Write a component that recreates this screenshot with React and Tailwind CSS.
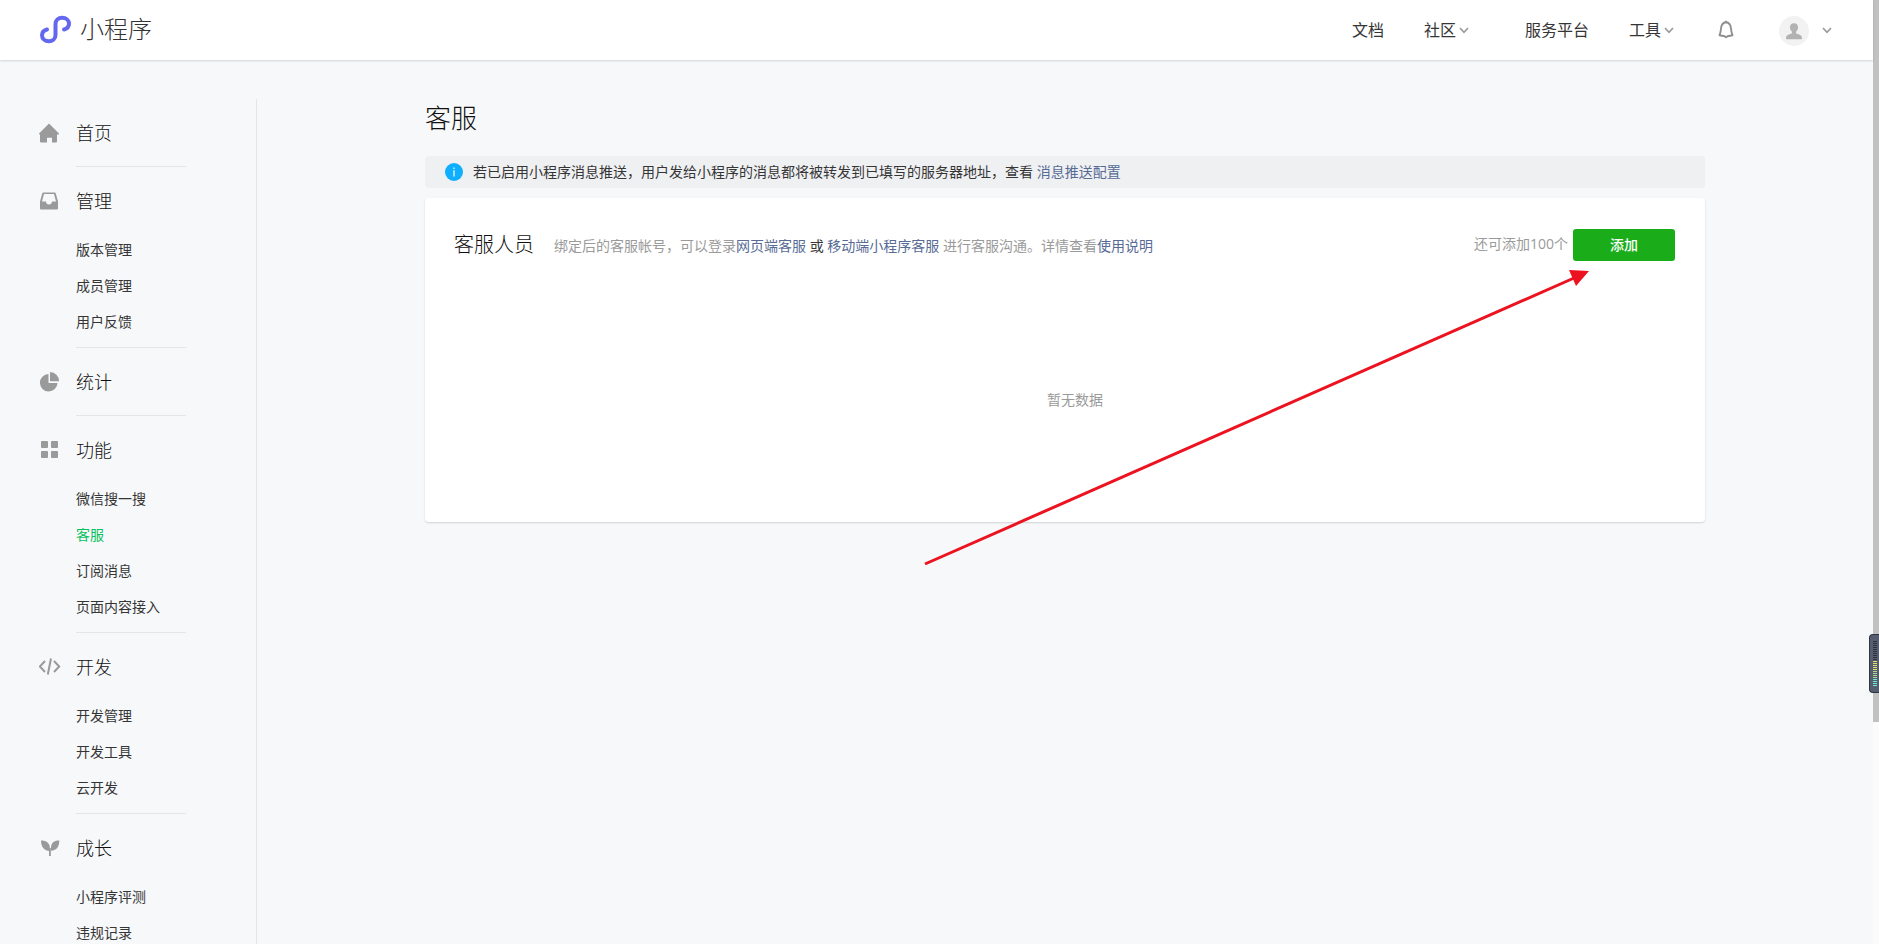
import React from 'react';

const menu = [
  { name: '首页', icon: 'home', items: [] },
  { name: '管理', icon: 'inbox', items: ['版本管理', '成员管理', '用户反馈'] },
  { name: '统计', icon: 'pie', items: [] },
  { name: '功能', icon: 'grid', items: ['微信搜一搜', '客服', '订阅消息', '页面内容接入'] },
  { name: '开发', icon: 'code', items: ['开发管理', '开发工具', '云开发'] },
  { name: '成长', icon: 'leaf', items: ['小程序评测', '违规记录'] },
];

const icons = {
  home: (
    <path d="M10 0.5 20 10.6q.2.9-.8.9H18v7q0 1-1 1h-4V14.700h-5v4.800H2q-1 0-1-1v-7H.8q-1 0-.8-.9z" />
  ),
  inbox: (
    <path
      fillRule="evenodd"
      d="M4.500 1.500h11q1 0 1.300 1L19 10.500v7q0 1-1 1H2q-1 0-1-1v-7l2.200-8q.3-1 1.300-1zM5 3 3 10.500h4q.2 3 3 3t3-3h4L15 3z"
    />
  ),
  pie: (
    <>
      <path d="M9.500 2v9h9a8.800 8.800 0 1 1-9-9z" />
      <path d="M11 0a9 9 0 0 1 9 9.200h-9z" />
    </>
  ),
  grid: (
    <>
      <rect x="2" y="1" width="7" height="7" rx="1" />
      <rect x="12" y="1" width="7" height="7" rx="1" />
      <rect x="2" y="11" width="7" height="7" rx="1" />
      <rect x="12" y="11" width="7" height="7" rx="1" />
    </>
  ),
  code: (
    <path
      d="M6 4 .8 9.500 6 15M15 4l5.200 5.500L15 15M12 1.500 8.800 17.500"
      fill="none"
      stroke="#9a9a9a"
      strokeWidth="2"
    />
  ),
  leaf: (
    <>
      <path d="M2 2.500c5.300 0 9.300 2 9 9.500v1C5 13 2 8.500 2 2.500z" />
      <path d="M20.300 2.500c-4.500 0-8 1.500-8.300 7v3.200c5.800-.2 8.300-4.200 8.300-10.200z" />
      <path d="M10 10h1.800v8H10z" />
    </>
  ),
};

const Chevron = () => (
  <svg className="w-[10px] h-[7px]" viewBox="0 0 10 7" fill="none" aria-hidden="true">
    <path d="M1 1l4 4.300L9 1" stroke="#9a9a9a" strokeWidth="1.700" />
  </svg>
);

const Header = () => (
  <header className="relative h-[60px] shrink-0 bg-white shadow-[0_1px_2px_rgba(0,0,0,0.15)] flex items-center justify-between pl-10 pr-[41px]">
    <a href="#inicio" className="flex items-center gap-2">
      <svg className="w-8 h-[30px]" viewBox="0 0 32 30" fill="none" aria-hidden="true">
        <path
          d="M7 14.500C3.500 15.500 2 17.500 2 20.200 2 23.800 5 26.300 8.800 26.300s6.700-2.600 6.700-6.300V9c0-3.700 2.900-6.300 6.700-6.300S29 5.200 29 8.800c0 2.700-1.500 4.700-5 5.700"
          stroke="#6467f0"
          strokeWidth="4"
          strokeLinecap="round"
        />
      </svg>
      <span className="pb-[2px] text-2xl leading-8 font-light text-[#333]">小程序</span>
    </a>
    <nav className="flex items-center text-base text-[#353535]">
      <a href="#docs">文档</a>
      <button type="button" className="ml-10 flex items-center gap-[3px]">
        社区
        <Chevron />
      </button>
      <a href="#plataforma" className="ml-14">服务平台</a>
      <button type="button" className="ml-10 flex items-center gap-[3px]">
        工具
        <Chevron />
      </button>
      <button type="button" aria-label="通知" className="ml-11">
        <svg className="w-4 h-5" viewBox="0 0 16 20" fill="none" aria-hidden="true">
          <path
            d="M8 2.300c3 .3 4.600 2.500 4.900 5.700.3 3 .6 5 1.600 7.300L9.500 16.200 8 17.300 6.500 16.200 1.500 15.300c1-2.300 1.300-4.300 1.600-7.300C3.400 4.800 5 2.600 8 2.300zM8 .8v1.500"
            stroke="#8f8f8f"
            strokeWidth="1.900"
            strokeLinejoin="round"
          />
        </svg>
      </button>
      <button type="button" aria-label="账号" className="ml-[45px] flex items-center gap-[13px]">
        <svg className="w-[30px] h-8 pt-[2px]" viewBox="0 0 30 30" aria-hidden="true">
          <circle cx="15" cy="15" r="15" fill="#f2f2f3" />
          <path
            d="M15 7.200c2.500 0 4.100 1.600 4.100 4.100 0 1.900-.8 3.300-2 4.200v2c3 .9 5.900 1.700 5.900 4.500 0 .9-.3 1.300-1 1.300H8c-.7 0-1-.4-1-1.300 0-2.800 2.900-3.600 5.900-4.500v-2c-1.200-.9-2-2.300-2-4.200 0-2.500 1.600-4.100 4.100-4.100z"
            fill="#b2b2b2"
          />
        </svg>
        <Chevron />
      </button>
    </nav>
  </header>
);

const Sidebar = () => (
  <aside className="w-[257px] shrink-0 border-r border-[#e4e5e7] pl-[39px]">
    {menu.map((grupo) => (
      <section key={grupo.name}>
        <a href="#menu" className="flex items-center h-[67px] text-lg font-light text-[#111]">
          <svg className="w-[22px] h-5 mr-[15px]" viewBox="0 0 22 20" fill="#9a9a9a" aria-hidden="true">
            {icons[grupo.icon]}
          </svg>
          {grupo.name}
        </a>
        {grupo.items.length > 0 && (
          <ul className="ml-[37px] pb-[9px] flex flex-col gap-1">
            {grupo.items.map((item) => (
              <li key={item} className="h-8 flex items-center">
                <a
                  href="#item"
                  className={item === '客服' ? 'text-sm text-[#07c160]' : 'text-sm text-[#353535]'}
                >
                  {item}
                </a>
              </li>
            ))}
          </ul>
        )}
        <div className="ml-[37px] w-[110px] h-px bg-[#e4e5e7]" />
      </section>
    ))}
  </aside>
);

const Card = () => (
  <section className="relative mt-[10px] h-[324px] bg-white rounded shadow-[0_1px_2px_rgba(0,0,0,0.15)] flex flex-col">
    <div className="flex items-center pt-[31px] pl-[29px] pr-[30px]">
      <h2 className="text-xl leading-8 font-light text-[#111]">客服人员</h2>
      <p className="ml-5 pt-[2px] text-sm text-[#9a9a9a]">
        绑定后的客服帐号，可以登录<a href="#web" className="text-[#576b95]">网页端客服</a>
        <span className="text-[#353535]"> 或 </span>
        <a href="#movil" className="text-[#576b95]">移动端小程序客服</a> 进行客服沟通。详情查看<a href="#ayuda" className="text-[#576b95]">使用说明</a>
      </p>
      <span className="ml-auto pb-[2px] text-sm text-[#9a9a9a]">还可添加100个</span>
      <button type="button" className="ml-[5px] w-[102px] h-8 rounded-[3px] bg-[#1aad19] text-sm font-medium text-white">
        添加
      </button>
    </div>
    <p className="mt-[129px] pl-5 text-center text-sm text-[#9a9a9a]">暂无数据</p>

    {/* flecha hacia el botón */}
    <svg className="absolute right-[116px] top-[71px] w-[665px] h-[297px] pointer-events-none" viewBox="0 0 665 297" aria-hidden="true">
      <path d="M1 295 650 9" stroke="#ec1220" strokeWidth="3" fill="none" />
      <path d="M645 1 665 2 652 17z" fill="#ec1220" />
    </svg>
  </section>
);

// medidor flotante pegado al borde derecho
const barras = [
  ...Array(10).fill('bg-[#2b2f3b]'),
  ...Array(5).fill('bg-[#e6e070]'),
  ...Array(4).fill('bg-[#a8e08a]'),
  ...Array(4).fill('bg-[#6eead2]'),
];

const App = () => {
  return (
    <div className="relative flex h-screen overflow-hidden bg-[#f7f8fa] font-['Open_Sans','Noto_Sans_CJK_SC',sans-serif]">
      <div className="flex-1 min-w-0 flex flex-col">
        <Header />
        <div className="flex flex-1 min-h-0 mt-[39px]">
          <Sidebar />
          <main className="flex-1 min-w-0">
            <div className="max-w-[1280px] mx-auto">
              <h1 className="text-[26px] leading-[38px] font-light text-[#111]">客服</h1>
              <div className="mt-[19px] h-8 rounded bg-[#eff0f2] flex items-center pl-5 text-sm text-[#353535]">
                <svg className="w-[18px] h-[18px] mr-[10px]" viewBox="0 0 18 18" aria-hidden="true">
                  <circle cx="9" cy="9" r="9" fill="#10aeff" />
                  <path d="M8.400 4.500h1.200v1.500H8.400zM8.400 7.200h1.200v6.300H8.400z" fill="#fff" />
                </svg>
                <p>
                  若已启用小程序消息推送，用户发给小程序的消息都将被转发到已填写的服务器地址，查看{' '}
                  <a href="#config" className="text-[#576b95]">消息推送配置</a>
                </p>
              </div>
              <Card />
            </div>
          </main>
        </div>
      </div>

      <div className="w-[6px] shrink-0 bg-[#fbfbfb]">
        <div className="h-[722px] bg-[#c1c1c1]" />
      </div>
      <div className="absolute right-0 top-[634px] w-[10px] h-[59px] rounded-l bg-[#555d6f] border border-r-0 border-[#2f3442] pl-[3px] pt-[6px] flex flex-col gap-px">
        {barras.map((color, i) => (
          <span key={i} className={`w-1 h-px ${color}`} />
        ))}
      </div>
    </div>
  );
};

export default App;
